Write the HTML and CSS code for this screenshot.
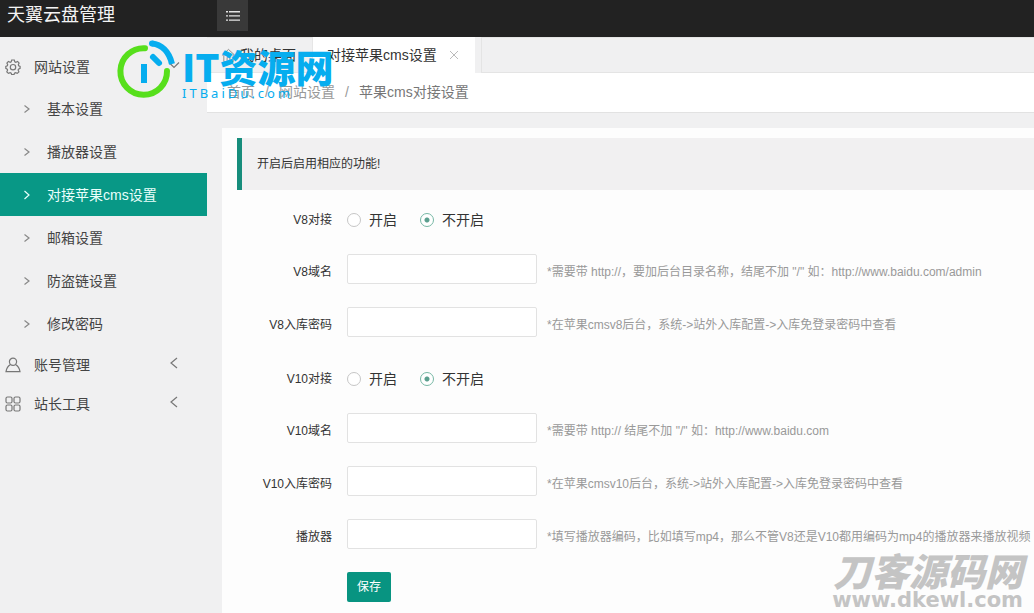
FILE: index.html
```html
<!DOCTYPE html>
<html lang="zh-CN">
<head>
<meta charset="utf-8">
<title>天翼云盘管理</title>
<link rel="stylesheet" href="styles.css">
</head>
<body>
<header class="topbar">
  <h1 class="brand">天翼云盘管理</h1>
  <button class="toggle" type="button" aria-label="菜单">
    <svg width="16" height="12" viewBox="0 0 16 12" fill="none" stroke="#e4e4e4" stroke-width="1.4"><path d="M1 1.700h2M4 1.700h11M1 5.900h2M4 5.900h11M1 10.100h2M4 10.100h11"/></svg>
  </button>
</header>
<div class="layout">
  <nav class="sidebar">
    <a class="group" href="#">
      <svg class="icon" viewBox="0 0 16 16"><path d="M6.700 1h2.600l.5 1.800 1 .5 1.800-.9 1.500 1.700-.8 1.700.4 1 1.400.6v2l-1.600.7-.4 1 .8 1.700-1.600 1.600-1.800-.8-1 .5-.5 1.600H6.700l-.5-1.600-1-.5-1.800.8-1.600-1.600.8-1.700-.4-1L.8 9.400V7.400l1.500-.6.4-1-.8-1.700 1.500-1.700 1.800.9 1-.5z"/><circle cx="8" cy="8.200" r="2.700"/></svg>
      <span>网站设置</span>
      <svg class="arrow" viewBox="0 0 12 12"><path d="M1 3.500l5 5 5-5"/></svg>
    </a>
    <div class="items">
      <a class="item" href="#"><svg class="chev" viewBox="0 0 8 10"><path d="M1.500 1.500L6 5 1.500 8.500"/></svg>基本设置</a>
      <a class="item" href="#"><svg class="chev" viewBox="0 0 8 10"><path d="M1.500 1.500L6 5 1.500 8.500"/></svg>播放器设置</a>
      <a class="item active" href="#"><svg class="chev" viewBox="0 0 8 10"><path d="M1.500 1L6 5 1.500 9"/></svg>对接苹果cms设置</a>
      <a class="item" href="#"><svg class="chev" viewBox="0 0 8 10"><path d="M1.500 1.500L6 5 1.500 8.500"/></svg>邮箱设置</a>
      <a class="item" href="#"><svg class="chev" viewBox="0 0 8 10"><path d="M1.500 1.500L6 5 1.500 8.500"/></svg>防盗链设置</a>
      <a class="item" href="#"><svg class="chev" viewBox="0 0 8 10"><path d="M1.500 1.500L6 5 1.500 8.500"/></svg>修改密码</a>
    </div>
    <a class="group" href="#">
      <svg class="icon" viewBox="0 0 16 16"><circle cx="8" cy="4.800" r="3.600"/><path d="M5.500 7.500C3 9 1.500 11.500 1 14.600h14C14.500 11.500 13 9 10.500 7.500"/></svg>
      <span>账号管理</span>
      <svg class="arrow" viewBox="0 0 12 12"><path d="M9 1L3 6l6 5"/></svg>
    </a>
    <a class="group" href="#">
      <svg class="icon" viewBox="0 0 16 16"><rect x="1" y="1" width="6" height="6" rx="1.500"/><rect x="9" y="1" width="6" height="6" rx="1.500"/><rect x="1" y="9" width="6" height="6" rx="1.500"/><rect x="9" y="9" width="6" height="6" rx="1.500"/></svg>
      <span>站长工具</span>
      <svg class="arrow" viewBox="0 0 12 12"><path d="M9 1L3 6l6 5"/></svg>
    </a>
  </nav>
  <main class="main">
    <div class="tabs">
      <a class="tab" href="#">
        <svg class="home" viewBox="0 0 16 16"><path d="M1 8l7-6.500L15 8M3 7v7.500h3.500V10h3v4.500H13V7"/></svg>我的桌面</a>
      <a class="tab current" href="#">对接苹果cms设置
        <svg class="close" viewBox="0 0 10 10"><path d="M1 1l8 8M9 1L1 9"/></svg></a>
      <div class="tab-rest"></div>
    </div>
    <div class="crumbs">
      <a href="#">首页</a><span>/</span><a href="#">网站设置</a><span>/</span><a class="here" href="#">苹果cms对接设置</a>
    </div>
    <form class="card">
      <p class="quote">开启后启用相应的功能!</p>
      <div class="row radios" role="radiogroup" aria-labelledby="v8">
        <span class="label" id="v8">V8对接</span>
        <label class="radio"><input type="radio" name="v8">开启</label>
        <label class="radio"><input type="radio" name="v8" checked>不开启</label>
      </div>
      <div class="row">
        <label class="label" for="v8-domain">V8域名</label>
        <input class="text" id="v8-domain" type="text">
        <span class="hint">*需要带 http://，要加后台目录名称，结尾不加 "/" 如：http://www.baidu.com/admin</span>
      </div>
      <div class="row">
        <label class="label" for="v8-pass">V8入库密码</label>
        <input class="text" id="v8-pass" type="text">
        <span class="hint">*在苹果cmsv8后台，系统-&gt;站外入库配置-&gt;入库免登录密码中查看</span>
      </div>
      <div class="row radios" role="radiogroup" aria-labelledby="v10">
        <span class="label" id="v10">V10对接</span>
        <label class="radio"><input type="radio" name="v10">开启</label>
        <label class="radio"><input type="radio" name="v10" checked>不开启</label>
      </div>
      <div class="row">
        <label class="label" for="v10-domain">V10域名</label>
        <input class="text" id="v10-domain" type="text">
        <span class="hint">*需要带 http:// 结尾不加 "/" 如：http://www.baidu.com</span>
      </div>
      <div class="row">
        <label class="label" for="v10-pass">V10入库密码</label>
        <input class="text" id="v10-pass" type="text">
        <span class="hint">*在苹果cmsv10后台，系统-&gt;站外入库配置-&gt;入库免登录密码中查看</span>
      </div>
      <div class="row">
        <label class="label" for="player">播放器</label>
        <input class="text" id="player" type="text">
        <span class="hint">*填写播放器编码，比如填写mp4，那么不管V8还是V10都用编码为mp4的播放器来播放视频</span>
      </div>
      <div class="actions"><button class="save" type="button">保存</button></div>
    </form>
  </main>
</div>
<div class="mark-top">
  <svg width="58" height="58" viewBox="0 0 58 58" fill="none" stroke-width="6">
    <path d="M28 8.200A23.300 23.300 0 1 0 50 31" stroke="#57df1c" stroke-linecap="round"/>
    <path d="M35 3.500C44 4.500 52 11 55 24" stroke="#06adef"/>
    <circle cx="35" cy="3.500" r="3" fill="#06adef" stroke="none"/>
    <path d="M36 17l6 6" stroke="#06adef" stroke-linecap="round"/>
    <path d="M27 24v19" stroke="#06adef"/>
  </svg>
  <div class="mark-words">
    <strong>IT资源网</strong>
    <span>ITBaiDu.com</span>
  </div>
</div>
<div class="mark-bottom"><strong>刀客源码网</strong><span>www.dkewl.com</span></div>
</body>
</html>
```
FILE: styles.css
```css
* { box-sizing: border-box; }
body {
  margin: 0;
  position: relative;
  min-height: 100vh;
  display: flex;
  flex-direction: column;
  overflow-x: hidden;
  background: #f0f0f1;
  color: #444;
  font: 14px/20px "Liberation Sans", "Noto Sans CJK SC", sans-serif;
}
a { color: inherit; text-decoration: none; }
svg { flex: none; }
.topbar { display: flex; height: 37px; background: #222; }
.brand {
  width: 217px;
  margin: 0;
  padding-left: 7px;
  color: #f4f4f4;
  font-size: 18px;
  font-weight: 400;
  line-height: 30px;
}
.toggle {
  display: flex;
  align-items: center;
  justify-content: center;
  width: 31px;
  height: 31px;
  padding: 0;
  border: 0;
  background: #393939;
}
.layout { flex: 1; display: flex; }
.sidebar { flex: none; width: 207px; padding-top: 10px; }
.items { padding-top: 1px; }
.group {
  display: flex;
  align-items: center;
  gap: 13px;
  height: 39px;
  padding: 0 27px 0 5px;
}
.icon { width: 16px; height: 16px; fill: none; stroke: #777; stroke-width: 1.2; }
.arrow { width: 12px; height: 12px; margin-left: auto; margin-bottom: 4px; fill: none; stroke: #777; stroke-width: 1.2; }
.item { display: flex; align-items: center; gap: 16px; height: 43px; padding-left: 23px; }
.chev { width: 8px; height: 10px; fill: none; stroke: #888; stroke-width: 1.2; }
.active { background: #089886; color: #e9fffb; }
.active .chev { stroke: #e9fffb; }
.main { flex: 1; min-width: 0; display: flex; flex-direction: column; }
.tabs { display: flex; height: 36px; }
.tab {
  display: flex;
  align-items: center;
  gap: 4px;
  padding: 0 16px 0 14px;
  border: 1px solid #e6e6e6;
  border-left: 0;
  color: #333;
}
.home { width: 15px; height: 15px; fill: none; stroke: #888; }
.current { gap: 12px; border: 0; background: #fff; }
.close { width: 10px; height: 10px; fill: none; stroke: #bbb; }
.tab-rest { flex: 1; margin-left: 6px; border: 1px solid #e4e4e4; border-right: 0; }
.crumbs {
  display: flex;
  gap: 9px;
  padding: 9px 20px 10px;
  background: #fff;
  border-bottom: 1px solid #e2e2e2;
  color: #999;
}
.here { color: #777; }
.crumbs span { width: 6px; text-align: center; }
.card {
  flex: 1;
  margin: 15px 0 0 15px;
  padding: 10px 0 11px 15px;
  overflow: hidden;
  background: #fdfdfd;
  color: #333;
}
.quote {
  margin: 0 0 11px;
  padding: 16px 15px;
  border-left: 5px solid #178d7c;
  background: #f1f0f1;
  font-size: 12px;
}
.row { display: flex; min-height: 36px; margin-bottom: 17px; font-size: 12px; white-space: nowrap; }
.label { flex: none; width: 95px; margin-right: 15px; padding-top: 8px; text-align: right; }
.radios .label { padding-top: 9px; }
.radio { display: flex; align-items: center; gap: 8px; height: 38px; margin-right: 23px; font-size: 14px; }
.radios { height: 36px; }
.radio input {
  appearance: none;
  width: 14px;
  height: 14px;
  margin: 0;
  border: 1px solid #c6c6c6;
  border-radius: 50%;
  background: #fff;
}
.radio input:checked { border-color: #77b8a5; background: radial-gradient(circle, #5a9f8e 2px, #fff 3px); }
.text {
  flex: none;
  width: 190px;
  height: 30px;
  padding: 0 8px;
  border: 1px solid #e2e2e2;
  border-radius: 2px;
  background: #fff;
}
.hint { padding: 8px 0 0 10px; color: #999; }
.actions { padding-left: 110px; }
.save {
  display: block;
  width: 44px;
  height: 30px;
  padding: 0;
  border: 0;
  border-radius: 2px;
  background: #089481;
  color: #fff;
  font: 12px/30px "Liberation Sans", "Noto Sans CJK SC", sans-serif;
}
.mark-top {
  position: absolute;
  top: 40px;
  left: 117px;
  display: flex;
  gap: 7px;
  color: #06adef;
}
.mark-words { padding-top: 6px; }
.mark-words strong { display: block; font: 900 38px/40px "Noto Sans CJK SC", sans-serif; }
.mark-words span { display: block; font: 13px/14px "Noto Sans", sans-serif; letter-spacing: 3px; }
.mark-bottom { position: absolute; right: 11px; bottom: 1px; color: #c4c4c4; text-align: right; }
.mark-bottom strong { display: block; font: italic 900 38px/36px "Noto Sans CJK SC", sans-serif; }
.mark-bottom span { display: block; font: 700 21px/24px "DejaVu Sans", sans-serif; }
```
